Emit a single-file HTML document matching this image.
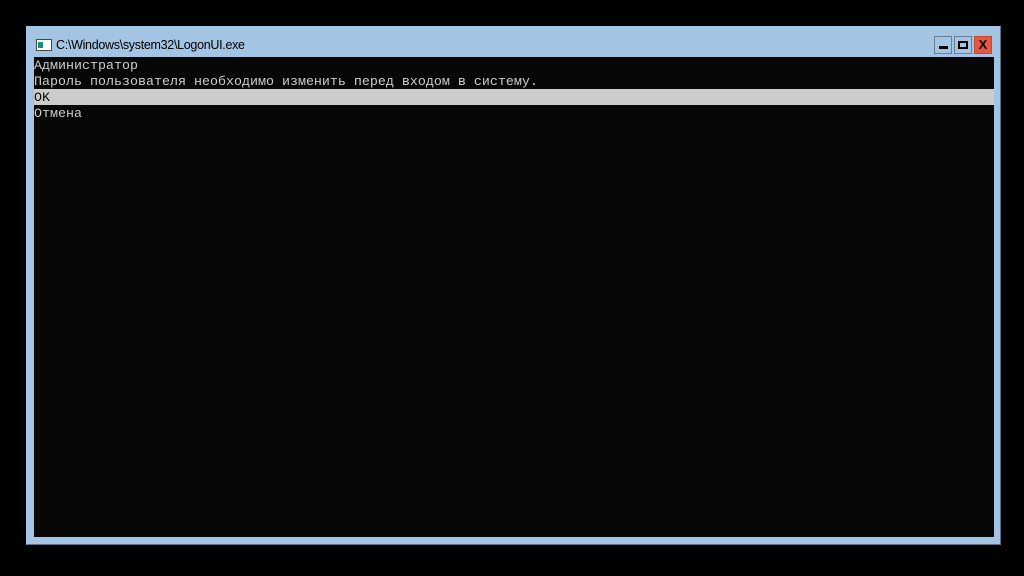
<!DOCTYPE html>
<html><head><meta charset="utf-8"><style>
body{margin:0;width:1024px;height:576px;background:#000;position:relative;overflow:hidden}
.win{position:absolute;left:26px;top:26px;width:973px;height:517px;background:#a3c4e2;border:1px solid #5f6f7f;border-top-color:#a3c4e2;border-left-color:#a3c4e2}
.title{position:absolute;left:56px;top:38px;font:12.5px "Liberation Sans",sans-serif;color:#000;letter-spacing:-0.3px}
.ico{position:absolute;left:36px;top:39px;width:14px;height:10px;background:#fff;border:1px solid #444}
.ico:before{content:"";position:absolute;left:1px;top:2px;width:5px;height:6px;background:#1a8c7a}
.btn{position:absolute;top:36px;width:16px;height:16px;border:1px solid #6a7f94;background:#a3c4e2}
.c{position:absolute;left:34px;top:57px;width:960px;height:480px;background:#070707;font:13.33px "Liberation Mono","DejaVu Sans Mono",monospace;color:#cccccc;line-height:16px}
.c div{height:16px;white-space:pre}
.c span{position:relative;top:2px}
.sel{background:#cccccc;color:#070707}
</style></head><body>
<div class="win"></div>
<div class="ico"></div>
<div class="title">C:\Windows\system32\LogonUI.exe</div>
<div class="btn" style="left:934px"><div style="position:absolute;left:4px;top:9px;width:9px;height:3px;background:#000"></div></div>
<div class="btn" style="left:954px"><div style="position:absolute;left:3px;top:4px;width:6px;height:4px;border:2px solid #000"></div></div>
<div class="btn" style="left:974px;background:#e5573f;border-color:#c8482f;font:bold 13px 'Liberation Sans',sans-serif;text-align:center;line-height:16px;color:#000">X</div>
<div class="c">
<div><span>Администратор</span></div>
<div><span>Пароль пользователя необходимо изменить перед входом в систему.</span></div>
<div class="sel"><span>OK</span></div>
<div><span>Отмена</span></div>
</div>
</body></html>
